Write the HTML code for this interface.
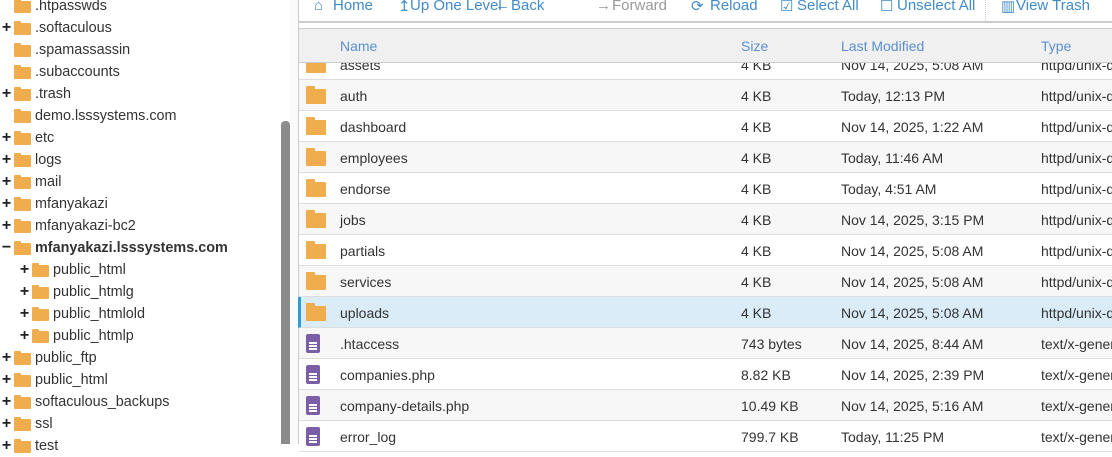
<!DOCTYPE html>
<html><head><style>
*{margin:0;padding:0;box-sizing:border-box}
body{width:1112px;height:444px;overflow:hidden;background:#fff;font-family:"Liberation Sans",sans-serif;position:relative}
.left{position:absolute;left:0;top:0;width:280px;height:444px;background:#fff}
.sb{position:absolute;left:281px;top:121px;width:9px;height:323px;background:#8c8c8c;border-radius:4px 4px 0 0}
.gut{position:absolute;left:290px;top:0;width:8px;height:444px;background:#fafafa}
.t{position:absolute;height:22px;font-size:14.4px;color:#333;display:flex;align-items:center;white-space:nowrap}
.pl{width:13px;font-weight:bold;font-size:16px;color:#222;text-align:center;margin-right:1px}
.f{width:17px;height:12px;background:#f0ad4e;border-radius:1px;margin-right:4px;position:relative;top:1px}
.f:before{content:"";position:absolute;left:0;top:-2px;width:7px;height:3px;background:#f0ad4e;border-radius:1px 1px 0 0}
.right{position:absolute;left:298px;top:0;width:814px;height:444px;border-left:1px solid #ccc}
.tb{position:absolute;left:0;top:0;width:814px;height:23px;border-bottom:2px solid #ccc;font-size:15px;color:#428bca}
.tb span{position:absolute;top:-3px;white-space:nowrap}
.hd{position:absolute;left:0;top:28px;width:814px;height:35px;background:#f0f0f0;border-top:1px solid #ccc;border-bottom:1px solid #ccc;font-size:14px;color:#5a8fcf}
.hd span{position:absolute;top:9px}
.r{position:absolute;left:0;width:814px;height:31px;border-bottom:1px solid #ddd;font-size:14px;color:#333}
.r span{position:absolute;top:8px;white-space:nowrap}
.r.a{background:#f7f7f7}
.r.s{background:#d9ecf8;border-left:3px solid #2a9fd6}
.fo{position:absolute;left:7px;top:9px;width:20px;height:15px;background:#f0ad4e;border-radius:1px}
.fo:before{content:"";position:absolute;left:0;top:-3px;width:9px;height:4px;background:#f0ad4e;border-radius:1px 1px 0 0}
.fi{position:absolute;left:7px;top:6px;width:14px;height:19px;background:#7b5ea7;border-radius:2px}
.fi:before{content:"";position:absolute;left:3px;top:8px;width:8px;height:1.5px;background:#fff;box-shadow:0 3px 0 #fff,0 6px 0 #fff}
</style></head><body>
<div class="left">
<div class="t" style="left:0;top:-5px"><span class="pl"></span><span class="f"></span>.htpasswds</div>
<div class="t" style="left:0;top:17px"><span class="pl">+</span><span class="f"></span>.softaculous</div>
<div class="t" style="left:0;top:39px"><span class="pl"></span><span class="f"></span>.spamassassin</div>
<div class="t" style="left:0;top:61px"><span class="pl"></span><span class="f"></span>.subaccounts</div>
<div class="t" style="left:0;top:83px"><span class="pl">+</span><span class="f"></span>.trash</div>
<div class="t" style="left:0;top:105px"><span class="pl"></span><span class="f"></span>demo.lsssystems.com</div>
<div class="t" style="left:0;top:127px"><span class="pl">+</span><span class="f"></span>etc</div>
<div class="t" style="left:0;top:149px"><span class="pl">+</span><span class="f"></span>logs</div>
<div class="t" style="left:0;top:171px"><span class="pl">+</span><span class="f"></span>mail</div>
<div class="t" style="left:0;top:193px"><span class="pl">+</span><span class="f"></span>mfanyakazi</div>
<div class="t" style="left:0;top:215px"><span class="pl">+</span><span class="f"></span>mfanyakazi-bc2</div>
<div class="t" style="left:0;top:237px;font-weight:bold"><span class="pl">−</span><span class="f"></span>mfanyakazi.lsssystems.com</div>
<div class="t" style="left:18px;top:259px"><span class="pl">+</span><span class="f"></span>public_html</div>
<div class="t" style="left:18px;top:281px"><span class="pl">+</span><span class="f"></span>public_htmlg</div>
<div class="t" style="left:18px;top:303px"><span class="pl">+</span><span class="f"></span>public_htmlold</div>
<div class="t" style="left:18px;top:325px"><span class="pl">+</span><span class="f"></span>public_htmlp</div>
<div class="t" style="left:0;top:347px"><span class="pl">+</span><span class="f"></span>public_ftp</div>
<div class="t" style="left:0;top:369px"><span class="pl">+</span><span class="f"></span>public_html</div>
<div class="t" style="left:0;top:391px"><span class="pl">+</span><span class="f"></span>softaculous_backups</div>
<div class="t" style="left:0;top:413px"><span class="pl">+</span><span class="f"></span>ssl</div>
<div class="t" style="left:0;top:435px"><span class="pl">+</span><span class="f"></span>test</div>
</div>
<div class="sb"></div><div class="gut"></div>
<div class="right">
<div class="tb">
<span style="left:15px">⌂</span><span style="left:34px">Home</span>
<span style="left:99px">↥</span><span style="left:111px">Up One Level</span>
<span style="left:196px">←</span><span style="left:212px">Back</span>
<span style="left:297px;color:#999">→</span><span style="left:313px;color:#999">Forward</span>
<span style="left:392px">⟳</span><span style="left:411px">Reload</span>
<span style="left:481px">☑</span><span style="left:498px">Select All</span>
<span style="left:581px">☐</span><span style="left:598px">Unselect All</span>
<span style="left:686px;height:26px;border-left:1px dotted #ccc"></span>
<span style="left:702px">▥</span><span style="left:717px">View Trash</span>
</div>
<div class="hd"><span style="left:41px">Name</span><span style="left:442px">Size</span><span style="left:542px">Last Modified</span><span style="left:742px">Type</span></div>
<div class="r" style="top:49px;height:31px;z-index:-1"><div class="fo"></div><span style="left:41px">assets</span><span style="left:442px">4 KB</span><span style="left:542px">Nov 14, 2025, 5:08 AM</span><span style="left:742px">httpd/unix-directory</span></div>
<div class="r a" style="top:80px"><div class="fo"></div><span style="left:41px">auth</span><span style="left:442px">4 KB</span><span style="left:542px">Today, 12:13 PM</span><span style="left:742px">httpd/unix-directory</span></div>
<div class="r" style="top:111px"><div class="fo"></div><span style="left:41px">dashboard</span><span style="left:442px">4 KB</span><span style="left:542px">Nov 14, 2025, 1:22 AM</span><span style="left:742px">httpd/unix-directory</span></div>
<div class="r a" style="top:142px"><div class="fo"></div><span style="left:41px">employees</span><span style="left:442px">4 KB</span><span style="left:542px">Today, 11:46 AM</span><span style="left:742px">httpd/unix-directory</span></div>
<div class="r" style="top:173px"><div class="fo"></div><span style="left:41px">endorse</span><span style="left:442px">4 KB</span><span style="left:542px">Today, 4:51 AM</span><span style="left:742px">httpd/unix-directory</span></div>
<div class="r a" style="top:204px"><div class="fo"></div><span style="left:41px">jobs</span><span style="left:442px">4 KB</span><span style="left:542px">Nov 14, 2025, 3:15 PM</span><span style="left:742px">httpd/unix-directory</span></div>
<div class="r" style="top:235px"><div class="fo"></div><span style="left:41px">partials</span><span style="left:442px">4 KB</span><span style="left:542px">Nov 14, 2025, 5:08 AM</span><span style="left:742px">httpd/unix-directory</span></div>
<div class="r a" style="top:266px"><div class="fo"></div><span style="left:41px">services</span><span style="left:442px">4 KB</span><span style="left:542px">Nov 14, 2025, 5:08 AM</span><span style="left:742px">httpd/unix-directory</span></div>
<div class="r s" style="top:297px;left:-1px"><div class="fo" style="left:5px"></div><span style="left:39px">uploads</span><span style="left:440px">4 KB</span><span style="left:540px">Nov 14, 2025, 5:08 AM</span><span style="left:740px">httpd/unix-directory</span></div>
<div class="r a" style="top:328px"><div class="fi"></div><span style="left:41px">.htaccess</span><span style="left:442px">743 bytes</span><span style="left:542px">Nov 14, 2025, 8:44 AM</span><span style="left:742px">text/x-generic</span></div>
<div class="r" style="top:359px"><div class="fi"></div><span style="left:41px">companies.php</span><span style="left:442px">8.82 KB</span><span style="left:542px">Nov 14, 2025, 2:39 PM</span><span style="left:742px">text/x-generic</span></div>
<div class="r a" style="top:390px"><div class="fi"></div><span style="left:41px">company-details.php</span><span style="left:442px">10.49 KB</span><span style="left:542px">Nov 14, 2025, 5:16 AM</span><span style="left:742px">text/x-generic</span></div>
<div class="r" style="top:421px"><div class="fi"></div><span style="left:41px">error_log</span><span style="left:442px">799.7 KB</span><span style="left:542px">Today, 11:25 PM</span><span style="left:742px">text/x-generic</span></div>
</div>
</body></html>
